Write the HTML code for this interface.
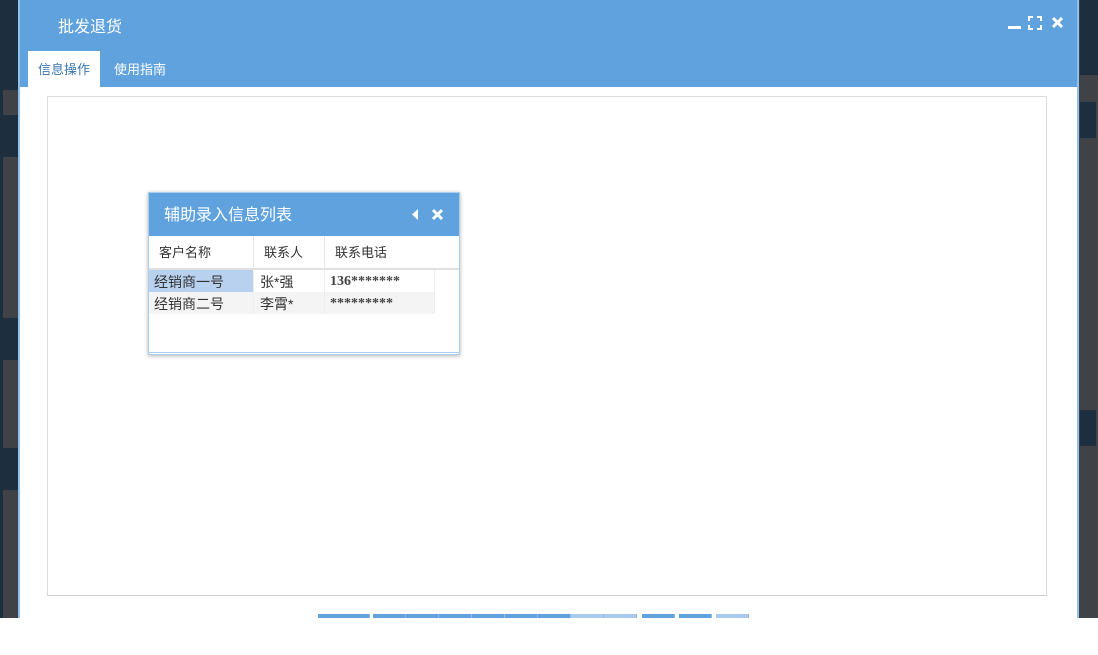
<!DOCTYPE html>
<html><head><meta charset="utf-8"><style>
body{margin:0;width:1098px;height:655px;position:relative;background:#fff;font-family:"Liberation Sans","Noto Sans CJK SC",sans-serif;overflow:hidden}
.bg{position:absolute;top:0;height:618px;background:#3f4246}
.dk{position:absolute;background:#1d2e3e}
.dlg{position:absolute;left:18px;top:0;width:1061px;height:618px;background:#fff;border-left:2px solid #8fc0ee;border-right:2px solid #8fc0ee;box-sizing:border-box}
.hd{position:absolute;left:0;top:0;width:100%;height:87px;background:#5fa2dd}
.tt{position:absolute;left:38px;top:13px;color:#fff;font-size:16px}
.tab{position:absolute;top:51px;height:36px;line-height:38px;font-size:13px;color:#fff}
.box{position:absolute;left:27px;top:96px;width:1000px;height:500px;border:1px solid #ddd;border-bottom-color:#ccc;box-sizing:border-box}
.pop{position:absolute;left:148px;top:192px;width:312px;height:163px;background:#fff;box-shadow:0 1px 4px rgba(0,0,0,.3);border:1px solid #a8cdee;box-sizing:border-box}
.ph{height:43px;background:#5fa2dd;color:#fff;font-size:16px;line-height:46px;padding-left:15px;position:relative}
.th{position:absolute;top:43px;height:33px;border-right:1px solid #e6e6e6;font-size:13px;line-height:33px;color:#333;box-sizing:border-box;padding-left:10px}
.cell{position:absolute;height:22px;line-height:24px;font-size:14px;color:#333;padding-left:5px;box-sizing:border-box;border-right:1px solid #eee}
.num{font-family:"Liberation Serif",serif;font-weight:bold;font-size:14px;color:#444}
.pg{position:absolute;top:614px;height:4px;background:#5fa2dd;border-right:1px solid #8dbbe6;box-sizing:border-box}
</style></head><body>
<div class="bg" style="left:0;width:18px"></div>
<div class="dk" style="left:0;top:0;width:3px;height:618px"></div>
<div class="dk" style="left:3px;top:0;width:15px;height:90px"></div>
<div class="dk" style="left:3px;top:115px;width:15px;height:42px"></div>
<div class="dk" style="left:3px;top:318px;width:15px;height:42px"></div>
<div class="dk" style="left:3px;top:448px;width:15px;height:42px"></div>
<div class="bg" style="left:1079px;width:19px"></div>
<div class="dk" style="left:1080px;top:0;width:18px;height:75px"></div>
<div class="dk" style="left:1080px;top:102px;width:16px;height:36px"></div>
<div class="dk" style="left:1080px;top:410px;width:16px;height:36px"></div>
<div class="dlg">
<div class="hd">
<div class="tt">批发退货</div>
<div style="position:absolute;left:8px;top:51px;width:72px;height:36px;background:#fff"></div>
<div class="tab" style="left:18px;color:#3a76b2">信息操作</div>
<div class="tab" style="left:94px">使用指南</div>
<div style="position:absolute;left:988px;top:26px;width:13px;height:3px;background:#fff"></div>
<svg style="position:absolute;left:1008px;top:16px" width="14" height="14" viewBox="0 0 14 14" fill="none" stroke="#fff" stroke-width="2"><path d="M1 5V1h4M9 1h4v4M13 9v4H9M5 13H1V9"/></svg>
<svg style="position:absolute;left:1031px;top:16px" width="13" height="13" viewBox="0 0 13 13" stroke="#fff" stroke-width="3"><path d="M2 2l9 9M11 2l-9 9"/></svg>
</div>
<div class="box"></div>
</div>
<div class="pop">
<div class="ph">辅助录入信息列表
<svg style="position:absolute;left:263px;top:16px" width="7" height="11"><path d="M6 0v11L0 5.5z" fill="#fff"/></svg>
<svg style="position:absolute;left:282px;top:15px" width="13" height="13" viewBox="0 0 13 13" stroke="#fff" stroke-width="3"><path d="M2 2l9 9M11 2l-9 9"/></svg>
</div>
<div class="th" style="left:0;width:105px">客户名称</div>
<div class="th" style="left:105px;width:71px">联系人</div>
<div class="th" style="left:176px;width:134px;border:0">联系电话</div>
<div style="position:absolute;left:0;top:75px;width:310px;height:2px;background:#e0e0e0"></div>
<div class="cell" style="left:0;top:77px;width:105px;background:#b8d1ef">经销商一号</div>
<div class="cell" style="left:105px;top:77px;width:71px;padding-left:6px">张*强</div>
<div class="cell num" style="left:176px;top:77px;width:110px">136*******</div>
<div class="cell" style="left:0;top:99px;width:105px;background:#f4f4f4">经销商二号</div>
<div class="cell" style="left:105px;top:99px;width:71px;background:#f4f4f4;padding-left:6px">李霄*</div>
<div class="cell num" style="left:176px;top:99px;width:110px;background:#f4f4f4">*********</div>
<div style="position:absolute;left:0;top:159px;width:310px;height:1px;background:#a8cdee"></div>
</div>
<div class="pg" style="left:318px;width:52px"></div>
<div class="pg" style="left:373px;width:33px"></div>
<div class="pg" style="left:406px;width:33px"></div>
<div class="pg" style="left:439px;width:33px"></div>
<div class="pg" style="left:472px;width:33px"></div>
<div class="pg" style="left:505px;width:33px"></div>
<div class="pg" style="left:538px;width:33px"></div>
<div class="pg" style="left:571px;width:33px;background:#a8cbee"></div>
<div class="pg" style="left:604px;width:33px;background:#a8cbee"></div>
<div class="pg" style="left:642px;width:33px"></div>
<div class="pg" style="left:679px;width:33px"></div>
<div class="pg" style="left:716px;width:33px;background:#a8cbee"></div>
</body></html>
